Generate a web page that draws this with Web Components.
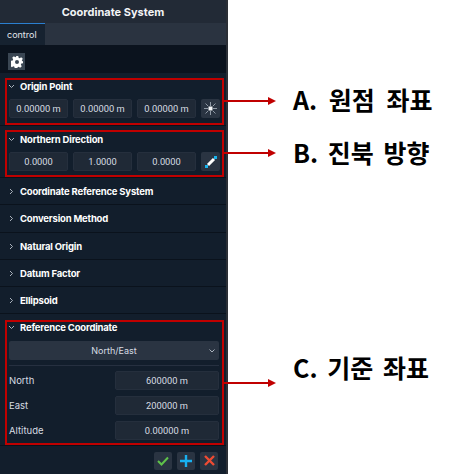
<!DOCTYPE html>
<html lang="en"><head><meta charset="utf-8"><title>Coordinate System</title>
<style>
html,body{margin:0;padding:0;background:#fff}
body{width:476px;height:474px;position:relative;overflow:hidden;font-family:Inter,"Liberation Sans",sans-serif}
</style></head><body>
<coord-panel>
  <panel-section title="Origin Point" open style="--h:53px">
    <div style="display:flex;gap:5px">
      <num-field>0.00000 m</num-field><num-field>0.00000 m</num-field><num-field>0.00000 m</num-field>
      <icon-btn icon="sun"></icon-btn>
    </div>
  </panel-section>
  <panel-section title="Northern Direction" open style="--h:52px">
    <div style="display:flex;gap:5px">
      <num-field>0.0000</num-field><num-field>1.0000</num-field><num-field>0.0000</num-field>
      <icon-btn icon="pick"></icon-btn>
    </div>
  </panel-section>
  <panel-section title="Coordinate Reference System"></panel-section>
  <panel-section title="Conversion Method"></panel-section>
  <panel-section title="Natural Origin"></panel-section>
  <panel-section title="Datum Factor"></panel-section>
  <panel-section title="Ellipsoid"></panel-section>
  <panel-section title="Reference Coordinate" wide open style="--h:132px">
    <select-box>North/East</select-box>
    <div style="height:1px;background:#263040;margin:5px 0 5px"></div>
    <label-row label="North">600000 m</label-row>
    <label-row label="East">200000 m</label-row>
    <label-row label="Altitude">0.00000 m</label-row>
  </panel-section>
</coord-panel>
<call-out box="5,78,219,47" arrow="101" label="A. 원점 좌표" ws="6" ly="84"></call-out>
<call-out box="5,130,219,47" arrow="153" label="B. 진북 방향" ws="4" ly="137"></call-out>
<call-out box="5,320,219,125" arrow="383" label="C. 기준 좌표" ws="4" ly="352"></call-out>
<script>
const def=(n,css,html)=>{customElements.define(n,class extends HTMLElement{
  connectedCallback(){ if(this.shadowRoot)return; const r=this.attachShadow({mode:'open'});
    r.innerHTML='<style>'+css+'</style>'+(typeof html==='function'?html(this):html); }
});};
const ICONS={
 gear:'<svg width="12" height="12" viewBox="0 0 24 24"><path fill="#fff" fill-rule="evenodd" d="M9.500 0h5l.7 3.400 2.200.9L20.300 2.400l3.300 3.300-1.900 2.900.9 2.200L24 9.500v5l-3.400.7-.9 2.200 1.900 2.900-3.300 3.300-2.900-1.900-2.200.9-.7 2.400h-5l-.7-3.400-2.200-.9-2.900 1.900-3.300-3.300 1.900-2.900-.9-2.200L0 14.500v-5l3.400-.7.9-2.200L2.400 3.700 5.700.4l2.900 1.900 2.200-.9zM12 8a4 4 0 1 0 0 8 4 4 0 0 0 0-8z"/></svg>',
 sun:'<svg width="13" height="13" viewBox="0 0 13 13"><g stroke="#8f99a5" stroke-width="1"><path d="M6.500 0v4M6.500 9v4M0 6.500h4M9 6.500h4M1.500 1.500l2.500 2.500M9 9l2.500 2.500M11.500 1.500 9 4M4 9l-2.500 2.500"/></g><rect x="4.500" y="4.500" width="4" height="4" fill="#f2f4f6"/></svg>',
 pick:'<svg width="12" height="12" viewBox="0 0 12 12"><path d="M3 9l6-6" stroke="#fff" stroke-width="3"/><rect x="0" y="9" width="3" height="3" fill="#18b4ee"/><rect x="9" y="0" width="3" height="3" fill="#18b4ee"/></svg>',
 check:'<svg width="12" height="10" viewBox="0 0 12 10"><path d="M1 5l3.500 3.500L11 1.500" fill="none" stroke="#5fc24a" stroke-width="2"/></svg>',
 plus:'<svg width="12" height="12" viewBox="0 0 12 12"><path d="M6 0v12M0 6h12" stroke="#18b0f0" stroke-width="2.400"/></svg>',
 x:'<svg width="11" height="11" viewBox="0 0 11 11"><path d="M1 1l9 9M10 1l-9 9" stroke="#ee4b33" stroke-width="2.400"/></svg>'
};
def('icon-btn',`:host{display:flex;align-items:center;justify-content:center;flex:none;width:19px;height:19px;background:#2a3442;border-radius:2px;box-sizing:border-box}
:host([kind=gear]){width:17px;height:17px;background:#3a4653;border-radius:0}
:host([kind=foot]){width:18px;height:18px;border-radius:2px}`,h=>ICONS[h.getAttribute('icon')]);
def('num-field',`:host{display:block;flex:none;width:59px;height:19px;line-height:18px;box-sizing:border-box;background:#1f2936;border:1px solid #252f3d;border-radius:2px;color:#d7dce2;font:9.300px/18px Roboto,sans-serif;text-align:center;white-space:nowrap}`,'<slot></slot>');
def('select-box',`:host{display:flex;position:relative;align-items:center;justify-content:center;height:19px;background:#2a3442;border-radius:2px;color:#d7dce2;font-size:9px}
svg{position:absolute;right:4px;top:8px}`,'<slot></slot><svg width="6" height="4" viewBox="0 0 6 4"><path d="M.5.500 3 3 5.500.5" fill="none" stroke="#aab2bc"/></svg>');
def('label-row',`:host{display:flex;align-items:center;justify-content:space-between;height:19px;margin-bottom:6px;color:#d7dce2;font-size:9.500px}
div{width:104px;height:19px;box-sizing:border-box;background:#1f2936;border:1px solid #252f3d;border-radius:2px;text-align:center;font:9.300px/18px Roboto,sans-serif}`,
 h=>`<span>${h.getAttribute('label')}</span><div><slot></slot></div>`);
def('panel-section',`:host{display:block;box-sizing:border-box;height:var(--h,27.3px);background:#121e2c;border-bottom:1px solid #0a121c}
.hd{display:flex;align-items:center;height:27px;padding-left:9px;color:#fff;font-size:9.500px;font-weight:700;gap:6px;letter-spacing:-.02em}
.ct{padding:0 7px 0 9px}
:host([open]) .hd{height:26px}
:host([wide]) .hd{height:27px}
svg{flex:none;width:5px;height:7px}`,
 h=>{const o=h.hasAttribute('open');return `<div class="hd">${o?'<svg viewBox="0 0 5 7"><path d="M0 2l2.500 2.500L5 2" fill="none" stroke="#aab2bc"/></svg>':'<svg viewBox="0 0 5 7"><path d="M1 1l2.500 2.500L1 6" fill="none" stroke="#aab2bc"/></svg>'}<span>${h.getAttribute('title')}</span></div>${o?'<div class="ct"><slot></slot></div>':''}`});
def('coord-panel',`:host{display:flex;flex-direction:column;box-sizing:border-box;width:228px;height:474px;background:#121e2c;border-right:2px solid #2b2f36;font-family:Inter,"Liberation Sans",sans-serif}
.title{height:23px;flex:none;display:flex;align-items:center;justify-content:center;background:#222a36;color:#f2f4f6;font-size:11px;font-weight:700}
.tabs{height:22px;flex:none;display:flex;background:#2a3340}
.tab{width:45px;box-sizing:border-box;border-top:1px solid #2b7fd0;background:#162230;color:#e3e7ec;font-size:9px;padding-left:7px;line-height:21px}
.tools{height:28px;flex:none;box-sizing:border-box;padding:8px 0 0 8px;background:#0b131e}
.foot{flex:1;display:flex;justify-content:flex-end;gap:5px;box-sizing:border-box;padding:5.500px 8px 0 0;background:#121e2c}`,
`<div class="title">Coordinate System</div><div class="tabs"><div class="tab">control</div></div>
<div class="tools"><icon-btn kind="gear" icon="gear"></icon-btn></div><slot></slot>
<div class="foot"><icon-btn kind="foot" icon="check"></icon-btn><icon-btn kind="foot" icon="plus"></icon-btn><icon-btn kind="foot" icon="x"></icon-btn></div>`);
def('call-out',`:host{display:contents}
.box{position:absolute;box-sizing:border-box;border:2px solid #c00000}
.ar{position:absolute;left:224px;width:52px;height:8px}
.lb{position:absolute;left:293px;color:#000;font:700 25px/30px "Noto Sans CJK KR","Liberation Sans",sans-serif;white-space:pre}`,
 h=>{const [x,y,w,b]=h.getAttribute('box').split(',');const a=+h.getAttribute('arrow');
 return `<div class="box" style="left:${x}px;top:${y}px;width:${w}px;height:${b}px"></div>
 <svg class="ar" style="top:${a-4}px" viewBox="0 0 52 8"><path d="M0 3h46v2H0z" fill="#c00000"/><path d="M44 0l8 4-8 4z" fill="#c00000"/></svg>
 <div class="lb" style="top:${h.getAttribute('ly')}px;word-spacing:${h.getAttribute('ws')}px">${h.getAttribute('label')}</div>`});
</script>
</body></html>
